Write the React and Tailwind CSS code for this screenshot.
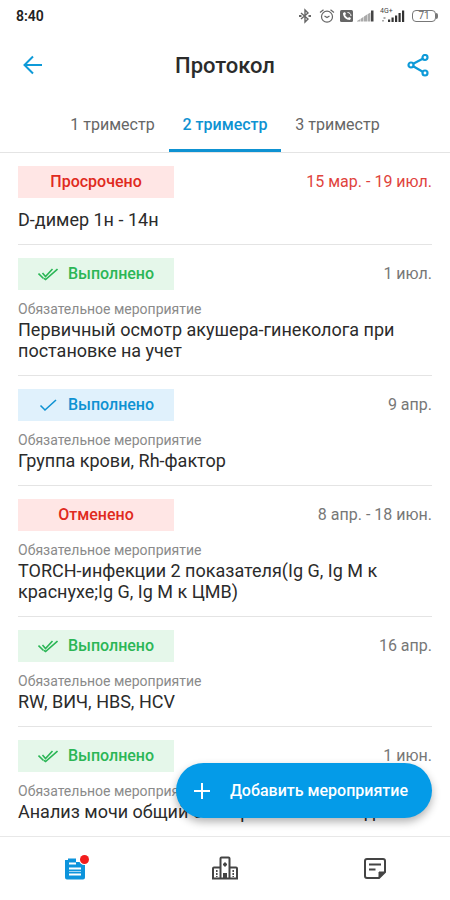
import React, { useState } from 'react';

const TABS = ['1 триместр', '2 триместр', '3 триместр'];

const EVENTS = [
    { id: 1, status: 'overdue', date: '15 мар. - 19 июл.', title: 'D-димер 1н - 14н', required: false },
    { id: 2, status: 'confirmed', date: '1 июл.', title: 'Первичный осмотр акушера-гинеколога при постановке на учет', required: true },
    { id: 3, status: 'done', date: '9 апр.', title: 'Группа крови, Rh-фактор', required: true },
    { id: 4, status: 'cancelled', date: '8 апр. - 18 июн.', title: 'TORCH-инфекции 2 показателя(Ig G, Ig M к краснухе;Ig G, Ig M к ЦМВ)', required: true },
    { id: 5, status: 'confirmed', date: '16 апр.', title: 'RW, ВИЧ, HBS, HCV', required: true },
    { id: 6, status: 'confirmed', date: '1 июн.', title: 'Анализ мочи общий с микроскопией осадка', required: true },
];

const STATUSES = {
    overdue: { label: 'Просрочено', style: 'bg-[#ffe6e5] text-[#e02a20]' },
    cancelled: { label: 'Отменено', style: 'bg-[#ffe6e5] text-[#e02a20]' },
    confirmed: { label: 'Выполнено', style: 'bg-[#e5f7ea] text-[#2bb656]', icon: 'double' },
    done: { label: 'Выполнено', style: 'bg-[#e0f1fc] text-[#0e92d2]', icon: 'single' },
};

const CheckIcon = ({ type }) => (
    <svg className="w-5 h-4" viewBox="0 0 20 16" fill="none" stroke="currentColor" strokeWidth="1.6">
        {type === 'double' ? (
            <>
                <path d="M0.5 7.5l5 5" />
                <path d="M4.5 7l3 3.5L14.5 3" />
                <path d="M5.8 12.3l1.8 1.2L19.5 3" />
            </>
        ) : (
            <path d="M2.5 8.5l4.5 4.5L18 3" />
        )}
    </svg>
);

const StatusBar = () => (
    <div className="flex items-center justify-between h-8 shrink-0 pl-4 pr-3">
        <span className="text-sm font-semibold text-[#222]">8:40</span>
        <div className="flex items-center text-[#666]">
            {/* Bluetooth */}
            <svg className="w-3 h-4 mr-2" viewBox="0 0 12 16" fill="none" stroke="currentColor" strokeWidth="1.4">
                <path d="M2 5l7 6-3 3V2l3 3-7 6" />
                <path d="M0 8h2.5M9.5 8H12" strokeWidth="1.8" />
            </svg>
            {/* Alarm */}
            <svg className="w-4 h-4 mr-1" viewBox="0 0 16 16" fill="none" stroke="currentColor" strokeWidth="1.2">
                <circle cx="8" cy="8.7" r="5.5" />
                <path d="M1 4.5l3.5-2.7M15 4.5l-3.5-2.7M5.5 8L8 9.5 10.5 8" />
            </svg>
            {/* Wi-Fi calling */}
            <svg className="w-4 h-4 mr-px" viewBox="0 0 16 16">
                <rect x="1" y="2" width="13" height="12" rx="1.5" fill="currentColor" />
                <path d="M4 5c0 4 3 7 7 7l1-2-2-1-1 1c-1.5-1-2.5-2-3-3l1-1-1-2z" fill="#fff" />
                <path d="M8.5 4.5c2 0 3.5 1.5 3.5 3.5" fill="none" stroke="#fff" />
            </svg>
            <svg className="w-5 h-4 mr-1" viewBox="0 0 20 16">
                <path d="M1 13.5h3v-2.2L1 13zM4.5 13.5h3V8.8l-3 2.2zM8 13.5h3v-7l-3 2zM11.5 13.5h3v-9l-3 1.8z" fill="#aaa" />
                <path d="M15 2.5h2.5v11H15z" fill="#444" />
            </svg>
            {/* 4G signal */}
            <div className="relative w-7 h-4 mr-1">
                <span className="absolute left-0 -top-px text-[7px] leading-[8px] text-[#444]">4G+</span>
                <svg className="w-7 h-4" viewBox="0 0 28 16" fill="#333">
                    <path d="M8 11.5h2.2V14H8zM11.5 9.5h2.2V14h-2.2zM15 7.5h2.2V14H15zM18.5 5h2.2v9h-2.2zM22 2.5h2.2V14H22z" />
                    <path d="M3.5 9h2v2h-2zM2 12h2v1.5H2z" fill="#aaa" />
                </svg>
            </div>
            <div className="flex items-center">
                <span className="flex items-center justify-center w-6 h-3 rounded-sm border border-[#777] text-[10px] leading-none">71</span>
                <span className="w-0.5 h-1.5 bg-[#777] rounded-r-sm" />
            </div>
        </div>
    </div>
);

const Header = () => (
    <header className="flex items-center justify-between h-[67px] shrink-0 px-5">
        <button type="button" aria-label="Назад" className="text-[#0e9ad8]">
            <svg className="w-6 h-6" viewBox="0 0 24 24" fill="none" stroke="currentColor" strokeWidth="2">
                <path d="M22 11H5M13 2.5L4.5 11l8.5 8.5" />
            </svg>
        </button>
        <h1 className="text-[22px] leading-7 font-medium text-[#2b2b2b]">Протокол</h1>
        <button type="button" aria-label="Поделиться" className="text-[#0e9ad8]">
            <svg className="w-6 h-6" viewBox="0 0 24 24" fill="none" stroke="currentColor" strokeWidth="2.2">
                <circle cx="5" cy="11" r="2.5" />
                <circle cx="19" cy="3.5" r="2.5" />
                <circle cx="19" cy="19" r="2.5" />
                <path d="M7.2 9.8l9.5-5M7.2 12.2l9.5 5.500" />
            </svg>
        </button>
    </header>
);

const EventCard = ({ event }) => {
    const status = STATUSES[event.status];

    return (
        <li className="pt-[13px] pb-3.5 border-b border-[#e4e4e4]">
            <div className="flex items-center justify-between mb-[11px]">
                <span className={`flex items-center justify-center gap-2.5 w-39 h-8 text-base font-medium ${status.style}`}>
                    {status.icon && <CheckIcon type={status.icon} />}
                    {status.label}
                </span>
                <span className={event.status === 'overdue' ? 'text-base text-[#e0433c]' : 'text-base text-[#777]'}>
                    {event.date}
                </span>
            </div>
            {event.required && (
                <p className="mb-0.5 text-sm leading-4 text-[#8a8a8a]">Обязательное мероприятие</p>
            )}
            <h2 className="text-lg leading-[21px] text-[#2b2b2b]">{event.title}</h2>
        </li>
    );
};

const BottomNav = () => (
    <nav className="grid grid-cols-3 h-16 shrink-0 border-t border-[#e8e8e8] bg-white text-[#444]">
        <button type="button" aria-label="Протокол" className="flex items-center justify-center text-[#0d94dc]">
            <svg className="w-8 h-8" viewBox="0 0 32 32">
                <path d="M6 7h3V5.5h8V9h9v15.500a2 2 0 01-2 2H8a2 2 0 01-2-2z" fill="currentColor" />
                <path d="M10 10.5h7M10 15.5h12M10 21.5h12" stroke="#fff" strokeWidth="2" />
                <path d="M10 18.5h12" stroke="#9fd3f2" strokeWidth="1" />
                <circle cx="25.5" cy="6.5" r="5.5" fill="#fff" />
                <circle cx="25.5" cy="6.5" r="4.5" fill="#f21d1d" />
            </svg>
        </button>
        <button type="button" aria-label="Клиники" className="flex items-center justify-center">
            <svg className="w-8 h-8" viewBox="0 0 32 32" fill="none" stroke="currentColor" strokeWidth="2">
                <path d="M11.5 25.5v-20a1 1 0 011-1h7a1 1 0 011 1v20" />
                <path d="M11.5 14.5H5a1 1 0 00-1 1v10h24v-10a1 1 0 00-1-1h-6.500" />
                <path d="M14 11.5h4M16 9.5v4M15 25v-4h2v4" />
                <path d="M7.8 17v7M24.2 17v7" strokeWidth="1.5" strokeDasharray="2 1" />
            </svg>
        </button>
        <button type="button" aria-label="Заметки" className="flex items-center justify-center">
            <svg className="w-8 h-8" viewBox="0 0 32 32" fill="none" stroke="currentColor" strokeWidth="2">
                <path d="M8 6h16a2 2 0 012 2v11l-6 6H8a2 2 0 01-2-2V8a2 2 0 012-2z" />
                <path d="M26 19h-6v6z" fill="currentColor" strokeWidth="1" />
                <path d="M10 11.5h12M10 16.5h6.500" />
            </svg>
        </button>
    </nav>
);

const App = () => {
    const [activeTab, setActiveTab] = useState(1);

    return (
        <div className="relative flex flex-col h-screen bg-white font-['Roboto',sans-serif]">
            <StatusBar />
            <Header />

            {/* Trimester tabs */}
            <div className="h-[54px] shrink-0 border-b border-[#e4e4e4]">
                <div role="tablist" className="grid grid-cols-3 w-3/4 h-full mx-auto">
                    {TABS.map((tab, index) => (
                        <button
                            key={tab}
                            type="button"
                            role="tab"
                            aria-selected={activeTab === index}
                            onClick={() => setActiveTab(index)}
                            className={`pt-0.5 border-b-3 text-base ${
                                activeTab === index
                                    ? 'border-[#0e92d2] font-medium text-[#0e92d2]'
                                    : 'border-transparent text-[#666]'
                            }`}
                        >
                            {tab}
                        </button>
                    ))}
                </div>
            </div>

            <main className="flex-1 min-h-0 overflow-y-auto px-[18px] [scrollbar-width:none]">
                <ul>
                    {EVENTS.map((event) => (
                        <EventCard key={event.id} event={event} />
                    ))}
                </ul>
            </main>

            {/* Floating action button */}
            <button
                type="button"
                className="absolute right-[18px] bottom-[82px] flex items-center gap-[18px] h-[55px] pl-4 pr-6 rounded-full bg-[#049be8] text-base font-medium text-white shadow-[0_4px_8px_rgba(0,0,0,0.3)]"
            >
                <svg className="w-5 h-5" viewBox="0 0 20 20" fill="none" stroke="currentColor" strokeWidth="2">
                    <path d="M10 2v16M2 10h16" />
                </svg>
                Добавить мероприятие
            </button>

            <BottomNav />
        </div>
    );
};

export default App;
